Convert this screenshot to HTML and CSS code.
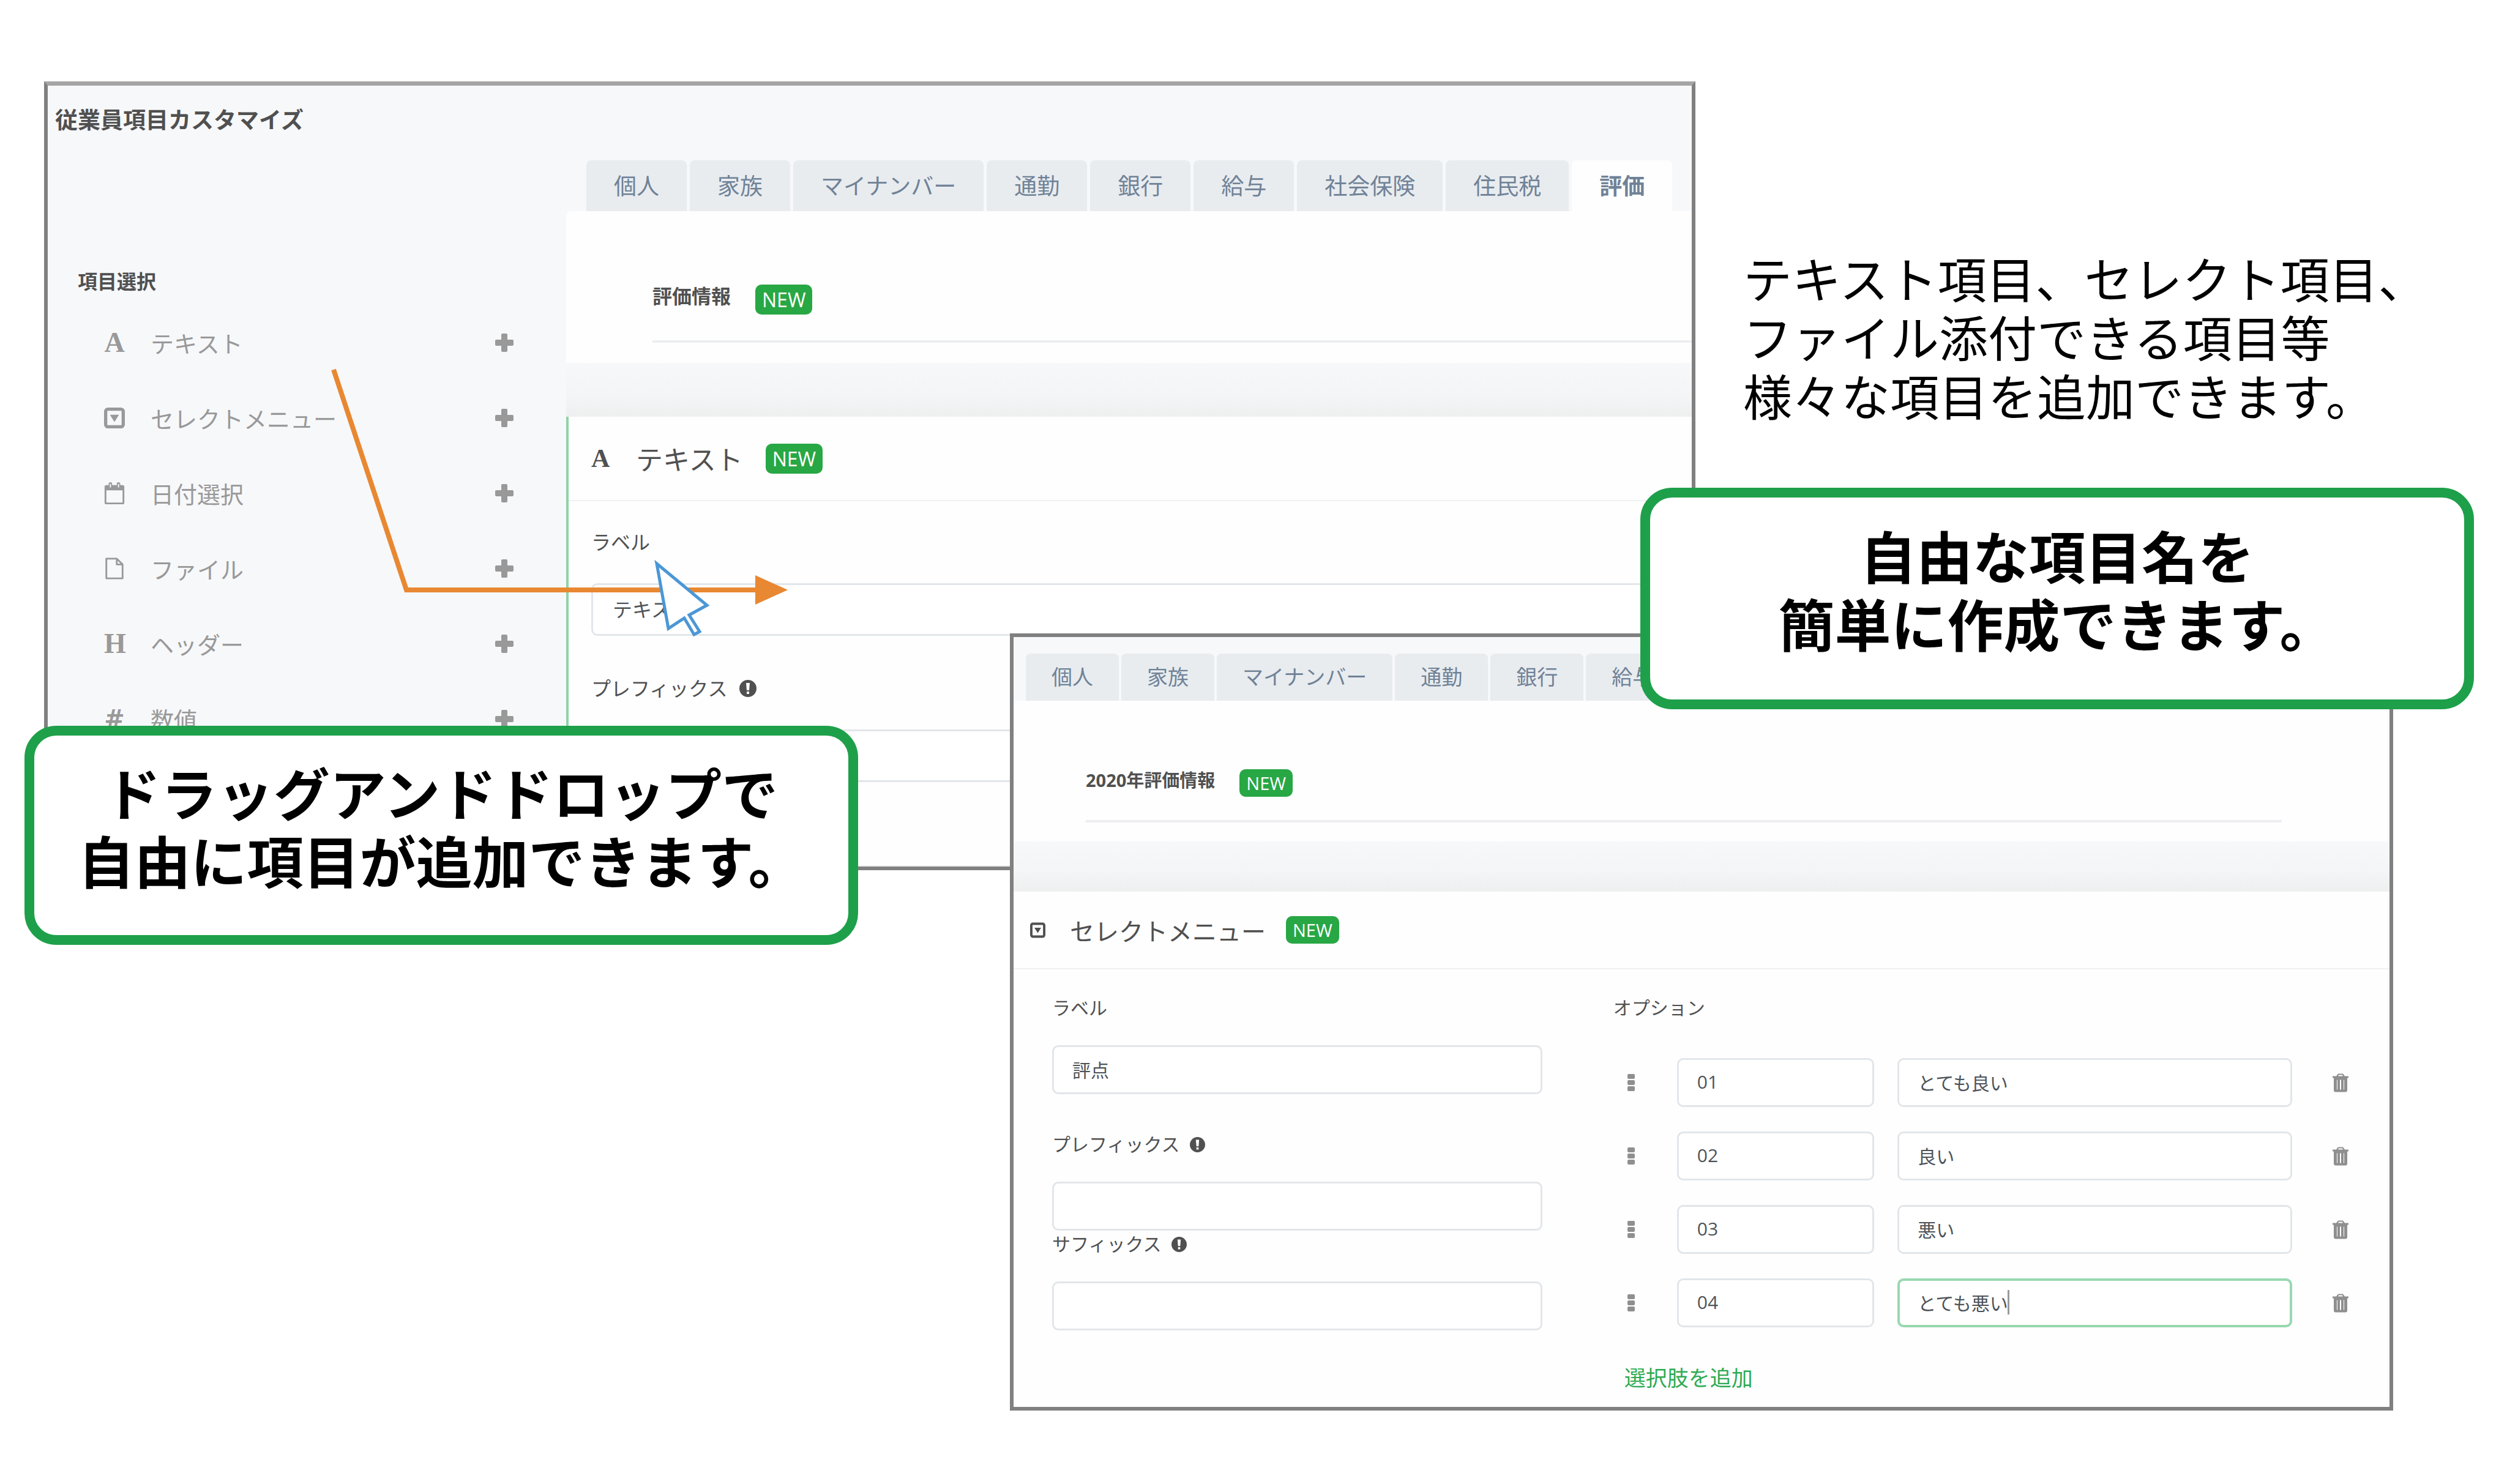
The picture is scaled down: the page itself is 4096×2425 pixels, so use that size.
FILE: index.html
```
<!DOCTYPE html>
<html lang="ja">

<head>
    <meta charset="UTF-8">
    <meta name="viewport" content="width=device-width, initial-scale=1.0">
    <title>従業員項目カスタマイズ</title>
    <link rel="stylesheet" href="styles.css">
</head>

<body>
    <!-- icons -->
    <svg class="defs" aria-hidden="true">
        <symbol id="plus" viewBox="0 0 30 30">
            <path d="M12 0h6a2 2 0 0 1 2 2v8h8a2 2 0 0 1 2 2v6a2 2 0 0 1-2 2h-8v8a2 2 0 0 1-2 2h-6a2 2 0 0 1-2-2v-8H2a2 2 0 0 1-2-2v-6a2 2 0 0 1 2-2h8V2a2 2 0 0 1 2-2z" />
        </symbol>
        <symbol id="select" viewBox="0 0 32 32">
            <path fill-rule="evenodd" d="M6 0h20a6 6 0 0 1 6 6v20a6 6 0 0 1-6 6H6a6 6 0 0 1-6-6V6a6 6 0 0 1 6-6zM6 5a1 1 0 0 0-1 1v20a1 1 0 0 0 1 1h20a1 1 0 0 0 1-1V6a1 1 0 0 0-1-1zM9 11h14l-7 11z" />
        </symbol>
        <symbol id="calendar" viewBox="0 0 34 38">
            <path fill-rule="evenodd" d="M3 5h4V3a3 3 0 0 1 6 0v2h8V3a3 3 0 0 1 6 0v2h4a3 3 0 0 1 3 3v27a3 3 0 0 1-3 3H3a3 3 0 0 1-3-3V8a3 3 0 0 1 3-3zM3 14v21h28V14zM9 3v6h2V3zM23 3v6h2V3z" />
        </symbol>
        <symbol id="file" viewBox="0 0 32 38">
            <path fill="none" stroke="currentColor" stroke-width="3" stroke-linejoin="round" d="M2 2h18l10 10v24H2zM20 2v10h10" />
        </symbol>
        <symbol id="info" viewBox="0 0 28 28">
            <path fill-rule="evenodd" d="M14 0a14 14 0 1 1 0 28a14 14 0 0 1 0-28zM11 5l1 12h4l1-12zM12 19v4h4v-4z" />
        </symbol>
        <symbol id="handle" viewBox="0 0 12 28">
            <rect width="12" height="8" rx="2" />
            <rect y="10" width="12" height="8" rx="2" />
            <rect y="20" width="12" height="8" rx="2" />
        </symbol>
        <symbol id="trash" viewBox="0 0 26 30">
            <path fill-rule="evenodd" d="M9 0h8l3 4h6v3h-2v20a3 3 0 0 1-3 3H5a3 3 0 0 1-3-3V7H0V4h6zM10 2L9 4h8l-1-2zM7 10v16h1V10zM12 10v16h2V10zM18 10v16h1V10z" />
        </symbol>
    </svg>

    <main class="slide">
        <section class="window window-text">
            <aside class="sidebar">
                <h1>従業員項目カスタマイズ</h1>
                <h2>項目選択</h2>
                <ul class="items">
                    <li><span class="letter">A</span><span class="name">テキスト</span><button aria-label="テキストを追加"><svg><use href="#plus" /></svg></button></li>
                    <li><svg class="item-icon"><use href="#select" /></svg><span class="name">セレクトメニュー</span><button aria-label="セレクトメニューを追加"><svg><use href="#plus" /></svg></button></li>
                    <li><svg class="item-icon"><use href="#calendar" /></svg><span class="name">日付選択</span><button aria-label="日付選択を追加"><svg><use href="#plus" /></svg></button></li>
                    <li><svg class="item-icon"><use href="#file" /></svg><span class="name">ファイル</span><button aria-label="ファイルを追加"><svg><use href="#plus" /></svg></button></li>
                    <li><span class="letter">H</span><span class="name">ヘッダー</span><button aria-label="ヘッダーを追加"><svg><use href="#plus" /></svg></button></li>
                    <li><span class="letter hash">#</span><span class="name">数値</span><button aria-label="数値を追加"><svg><use href="#plus" /></svg></button></li>
                </ul>
            </aside>
            <div class="content">
                <nav class="tabs">
                    <button>個人</button>
                    <button>家族</button>
                    <button>マイナンバー</button>
                    <button>通勤</button>
                    <button>銀行</button>
                    <button>給与</button>
                    <button>社会保険</button>
                    <button>住民税</button>
                    <button class="active">評価</button>
                </nav>
                <div class="group">
                    <div class="group-title">
                        <h3>評価情報</h3>
                        <span class="badge">NEW</span>
                    </div>
                </div>
                <div class="strip"></div>
                <div class="card">
                    <div class="card-head">
                        <span class="letter">A</span>
                        <h3>テキスト</h3>
                        <span class="badge">NEW</span>
                    </div>
                    <div class="card-body">
                        <label for="text-label">ラベル</label>
                        <input type="text" id="text-label" value="テキスト">
                        <label for="text-prefix" class="next">プレフィックス <svg class="info"><use href="#info" /></svg></label>
                        <input type="text" id="text-prefix">
                    </div>
                </div>
            </div>
        </section>

        <!-- drag line and mouse cursor -->
        <svg class="drag" viewBox="520 590 790 470" aria-hidden="true">
            <path d="M545 604L664 964H1240" fill="none" stroke="#e88832" stroke-width="8" />
            <path d="M1234 940L1287 964L1234 988z" fill="#e88832" />
            <path d="M1073 921L1155 989L1126 1005L1143 1032L1134 1037L1118 1010L1092 1027z" fill="#fff" stroke="#4b97d6" stroke-width="5" />
        </svg>

        <section class="window window-select">
            <div class="content">
                <nav class="tabs">
                    <button>個人</button>
                    <button>家族</button>
                    <button>マイナンバー</button>
                    <button>通勤</button>
                    <button>銀行</button>
                    <button>給与</button>
                    <button>社会保険</button>
                    <button>住民税</button>
                    <button class="active">評価</button>
                </nav>
                <div class="group">
                    <div class="group-title">
                        <h3>2020年評価情報</h3>
                        <span class="badge">NEW</span>
                    </div>
                </div>
                <div class="strip"></div>
                <div class="card">
                    <div class="card-head">
                        <svg class="head-icon"><use href="#select" /></svg>
                        <h3>セレクトメニュー</h3>
                        <span class="badge">NEW</span>
                    </div>
                    <div class="card-body">
                        <div class="fields">
                            <label for="select-label">ラベル</label>
                            <input type="text" id="select-label" value="評点">
                            <label for="select-prefix" class="next">プレフィックス <svg class="info"><use href="#info" /></svg></label>
                            <input type="text" id="select-prefix">
                            <label for="select-suffix">サフィックス <svg class="info"><use href="#info" /></svg></label>
                            <input type="text" id="select-suffix">
                        </div>
                        <div class="options">
                            <h4>オプション</h4>
                            <div class="option">
                                <svg class="handle"><use href="#handle" /></svg>
                                <div class="inputs">
                                    <input type="text" value="01" aria-label="コード1">
                                    <input type="text" value="とても良い" aria-label="選択肢1">
                                </div>
                                <button aria-label="選択肢1を削除"><svg><use href="#trash" /></svg></button>
                            </div>
                            <div class="option">
                                <svg class="handle"><use href="#handle" /></svg>
                                <div class="inputs">
                                    <input type="text" value="02" aria-label="コード2">
                                    <input type="text" value="良い" aria-label="選択肢2">
                                </div>
                                <button aria-label="選択肢2を削除"><svg><use href="#trash" /></svg></button>
                            </div>
                            <div class="option">
                                <svg class="handle"><use href="#handle" /></svg>
                                <div class="inputs">
                                    <input type="text" value="03" aria-label="コード3">
                                    <input type="text" value="悪い" aria-label="選択肢3">
                                </div>
                                <button aria-label="選択肢3を削除"><svg><use href="#trash" /></svg></button>
                            </div>
                            <div class="option">
                                <svg class="handle"><use href="#handle" /></svg>
                                <div class="inputs">
                                    <input type="text" value="04" aria-label="コード4">
                                    <div class="editing">
                                        <input type="text" value="とても悪い" aria-label="選択肢4">
                                        <span class="caret"></span>
                                    </div>
                                </div>
                                <button aria-label="選択肢4を削除"><svg><use href="#trash" /></svg></button>
                            </div>
                            <button class="add">選択肢を追加</button>
                        </div>
                    </div>
                </div>
            </div>
        </section>

        <p class="description">テキスト項目、セレクト項目、<br>ファイル添付できる項目等<br>様々な項目を追加できます。</p>
        <p class="callout callout-name">自由な項目名を<br>簡単に作成できます。</p>
        <p class="callout callout-drag">ドラッグアンドドロップで<br>自由に項目が追加できます。</p>
    </main>
</body>

</html>
```

FILE: styles.css
```
* {
    box-sizing: border-box;
}

body {
    margin: 0;
    background-color: #fff;
    font-family: "Open Sans", "Noto Sans CJK JP", sans-serif;
    color: #505050;
}

h1,
h2,
h3,
h4,
p,
ul {
    margin: 0;
    padding: 0;
}

button {
    padding: 0;
    border: none;
    background: none;
    font-family: inherit;
    color: inherit;
}

svg {
    display: block;
    flex: none;
    fill: currentColor;
}

.defs {
    position: absolute;
    width: 0;
    height: 0;
}

.slide {
    position: relative;
    min-height: 100vh;
    overflow: hidden;
}

/* windows */
.window {
    position: absolute;
    border: 6px solid #808080;
    background-color: #f7f8fa;
    overflow: hidden;
}

.window-text {
    left: 72px;
    right: 1326px;
    top: 133px;
    display: grid;
    grid-template-columns: 847px 1fr;
    border-top: 7px solid #a5a5a5;
}

.window-select {
    left: 1650px;
    right: 186px;
    top: 1035px;
}

/* sidebar */
.sidebar {
    padding-top: 28px;
}

.sidebar h1 {
    margin-left: 12px;
    font-size: 37px;
    line-height: 56px;
}

.sidebar h2 {
    margin: 212px 0 14px 49px;
    font-size: 32px;
    line-height: 48px;
}

.items {
    list-style: none;
    padding: 0 86px 0 92px;
    color: #999;
}

.items li {
    display: flex;
    align-items: center;
    height: 123px;
    font-size: 38px;
}

.item-icon {
    width: 34px;
    height: 36px;
}

.name {
    flex: 1;
    margin-left: 42px;
}

.items button svg {
    width: 30px;
    height: 30px;
}

.letter {
    width: 34px;
    font-family: "Liberation Serif", serif;
    font-size: 46px;
    font-weight: bold;
    text-align: center;
}

.hash {
    font-family: "DejaVu Sans", sans-serif;
    font-size: 40px;
}

/* tabs */
.content {
    min-width: 0;
}

.tabs {
    display: flex;
    gap: 5px;
    padding: 122px 0 0 33px;
}

.tabs button {
    flex: none;
    height: 83px;
    padding: 0 45px 4px;
    border-radius: 8px 8px 0 0;
    background-color: #e8ecef;
    font-size: 37px;
    color: #708297;
}

.tabs .active {
    background-color: #fefefe;
    font-weight: bold;
}

.window-select .tabs {
    gap: 4px;
    padding: 27px 0 0 20px;
}

.window-select .tabs button {
    height: 77px;
    padding: 0 42px 4px;
    font-size: 34px;
}

/* group title */
.group {
    padding: 120px 0 33px 141px;
    border-top-left-radius: 8px;
    background-color: #fefefe;
}

.group-title {
    display: flex;
    align-items: flex-start;
    gap: 40px;
    padding-bottom: 42px;
    border-bottom: 4px solid #eceef1;
}

.group-title h3 {
    font-size: 32px;
    line-height: 38px;
}

.badge {
    padding: 0 11px;
    border-radius: 10px;
    background-color: #28a745;
    font-size: 32px;
    line-height: 49px;
    color: #fff;
}

.window-select .group {
    padding: 112px 176px 31px 118px;
    border-radius: 0;
}

.window-select .group-title {
    padding-bottom: 38px;
}

.window-select .group-title h3 {
    font-size: 29px;
    line-height: 36px;
}

.window-select .badge {
    font-size: 29px;
    line-height: 45px;
}

.strip {
    height: 88px;
    background: linear-gradient(#f6f8fa, #f4f5f6 60%, #eeefef);
}

.window-select .strip {
    height: 82px;
}

/* card */
.card {
    background-color: #fefefe;
}

.window-text .card {
    border-left: 4px solid #8fd3a8;
    border-bottom: 2px solid #eee;
}

.card-head {
    display: flex;
    align-items: center;
    height: 138px;
    padding-left: 37px;
    border-bottom: 2px solid #f0f1f2;
}

.card-head h3 {
    margin: 0 37px 0 44px;
    font-size: 44px;
    font-weight: normal;
}

.card-head .letter {
    width: 29px;
    font-size: 42px;
}

.head-icon {
    width: 25px;
    height: 26px;
}

.window-select .card-head {
    height: 127px;
    padding-left: 27px;
}

.window-select .card-head h3 {
    margin: 0 33px 0 40px;
    font-size: 40px;
}

.card-body {
    padding: 43px 37px 136px;
}

label,
h4 {
    display: flex;
    align-items: center;
    gap: 20px;
    margin-bottom: 43px;
    font-size: 32px;
    font-weight: normal;
    line-height: 48px;
}

.info {
    width: 28px;
    height: 28px;
}

input {
    display: block;
    width: 100%;
    height: 86px;
    padding: 0 32px 5px;
    border: 3px solid #e2e6ea;
    border-radius: 10px;
    background-color: #fff;
    font-family: inherit;
    font-size: 32px;
    color: #4d5359;
}

.next {
    margin-top: 62px;
}

.window-select .card-body {
    display: grid;
    grid-template-columns: 2fr 3fr;
    gap: 116px;
    padding: 41px 67px 22px 63px;
}

.window-select label,
.window-select h4 {
    gap: 16px;
    margin-bottom: 39px;
    font-size: 30px;
    line-height: 44px;
}

.window-select .info {
    width: 25px;
    height: 25px;
}

.window-select .next {
    margin-top: 60px;
}

.window-select input {
    height: 80px;
    padding: 0 30px 3px;
    font-size: 30px;
}

/* options */
.window-select h4 {
    margin-bottom: 60px;
}

.option {
    display: flex;
    align-items: center;
    margin-bottom: 40px;
    padding-left: 23px;
    color: #8f8f8f;
}

.handle {
    width: 12px;
    height: 28px;
}

.inputs {
    flex: 1;
    display: grid;
    grid-template-columns: 1fr 2fr;
    gap: 38px;
    margin: 0 66px 0 69px;
}

.editing {
    position: relative;
}

.window-select .editing input {
    border: 4px solid #98d8b0;
    padding-left: 29px;
}

.caret {
    position: absolute;
    left: 180px;
    top: 19px;
    width: 3px;
    height: 40px;
    background-color: #999;
}

.option button svg {
    width: 26px;
    height: 31px;
}

.add {
    display: block;
    margin: 58px 0 0 18px;
    font-size: 35px;
    line-height: 50px;
    color: #2fab53;
}

/* drag line */
.drag {
    position: absolute;
    left: 520px;
    top: 590px;
    width: 790px;
    height: 470px;
}

/* texts over the windows */
.description {
    position: absolute;
    left: 2848px;
    top: 408px;
    font-size: 80px;
    line-height: 96px;
    color: #000;
    white-space: nowrap;
}

.callout {
    position: absolute;
    padding: 42px 0 66px;
    border: 16px solid #1ea04a;
    border-radius: 52px;
    background-color: #fff;
    font-size: 92px;
    font-weight: bold;
    line-height: 111px;
    text-align: center;
    color: #000;
    white-space: nowrap;
}

.callout-name {
    left: 2680px;
    right: 54px;
    top: 797px;
}

.callout-drag {
    left: 40px;
    width: 1362px;
    top: 1186px;
    padding: 40px 0 64px;
}
```
